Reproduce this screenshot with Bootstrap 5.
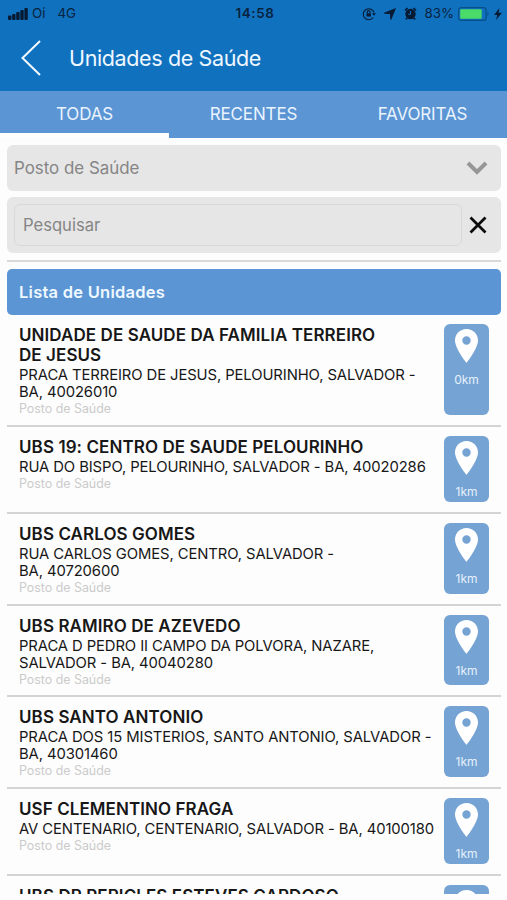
<!DOCTYPE html>
<html lang="pt-BR">
<head>
<meta charset="utf-8">
<meta name="viewport" content="width=device-width, initial-scale=1">
<title>Unidades de Saúde</title>
<link href="https://cdn.jsdelivr.net/npm/bootstrap@5.3.0/dist/css/bootstrap.min.css" rel="stylesheet">
<style>
body{font-family:Inter,"Liberation Sans",sans-serif;background:#fdfdfd;color:#171717}
.screen{height:894px}
.top-area{background:#1071bf}
.status{height:27px;padding:0 5px 0 8px;color:#082340;font-size:13.3px}
.status>div{flex:1 1 0}
.clock{font-weight:600;letter-spacing:.6px;font-size:13.4px}
.title-bar{height:64px;padding:0 0 2px 21px}
.title-bar h1{font-size:21.5px;font-weight:400;margin:1px 0 0 28px;color:#eef7ff;letter-spacing:-.37px}
.tabs{height:47px;background:#5b95d3}
.tabs .nav-link{height:47px;padding:0;line-height:46px;font-size:17px;letter-spacing:-.15px;color:#e9f4ff;border-radius:0}
.tabs .nav-link.active{border-bottom:5px solid #fff;color:#e9f4ff}
.content-area{padding:7px 6px 0 7px}
.panel{background:#e6e6e6;border-radius:6px;color:#858585;font-size:16.9px}
.picker{height:46px;padding:0 13px 0 7px}
.search{height:56px;margin-top:6px;padding:0 14px 0 7px}
.search-input{height:42px;width:448px;border:1px solid #d8d8d8;border-radius:6px;padding:0 8px;background:transparent;font-size:16.6px;color:#858585}
.search-input::placeholder{color:#858585;opacity:1}
.rule{height:2px;background:#d9d9d9;margin:7px 0}
.list-head{height:46px;background:#5b95d3;border-radius:5px;color:#eff8ff;font-weight:600;font-size:16.5px;letter-spacing:.25px;padding:0 0 0 12px}
.unit{padding:9px 12px 10px;border-bottom:2px solid #d4d4d4;height:91.6px}
.unit.first{height:111.5px}
.unit.short{height:87.6px}
.unit h2{font-size:17px;letter-spacing:.08px;line-height:20px;font-weight:600;margin:1px 0 0;white-space:nowrap}
.unit p{font-size:14.8px;letter-spacing:-.09px;line-height:17px;margin:0;white-space:nowrap}
.unit h2+p{margin-top:2px}
.unit .kind{font-size:12.4px;letter-spacing:0;line-height:15px;color:#cbcbcb}
.dist{width:45px;background:#75a3d3;border-radius:6px;color:#e6f1fc;font-size:12px;line-height:14px;padding-top:5px}
.dist svg{display:block;margin-bottom:10px}
</style>
<script src="https://cdn.jsdelivr.net/npm/bootstrap@5.3.0/dist/js/bootstrap.bundle.min.js"></script>
</head>
<body>
<svg class="d-none"><symbol id="pin" viewBox="0 0 23 34"><path fill="#fff" fill-rule="evenodd" d="M11.5 0C5 0 0 5 0 11.5 0 19.5 11.5 34 11.5 34S23 19.5 23 11.5C23 5 18 0 11.5 0Zm0 7.3a4.2 4.2 0 1 1 0 8.4 4.2 4.2 0 0 1 0-8.4Z"/></symbol></svg>
<div class="screen overflow-hidden">
<header class="top-area">
  <div class="status d-flex align-items-center">
    <div class="d-flex align-items-center"><svg width="20" height="12" viewBox="0 0 20 12" fill="#071a33"><rect x="0" y="7.5" width="3.4" height="4.5" rx="1"/><rect x="4.100" y="6" width="3.400" height="6" rx="1"/><rect x="8.200" y="4" width="3.400" height="8" rx="1"/><rect x="12.300" y="2" width="3.400" height="10" rx="1"/><rect x="16.400" y="0" width="3.400" height="12" rx="1"/></svg><span class="ms-1">Oi</span><span class="ps-1 ms-2">4G</span></div>
    <span class="clock">14:58</span>
    <div class="d-flex align-items-center justify-content-end">
      <svg width="14" height="14" viewBox="0 0 14 14" fill="none" stroke="#061a33" stroke-width="1.1"><path d="M11.200 10.500A5.500 5.500 0 1 1 12 5.500"/><path d="M10.200 6.200h3.700L12 8.800Z" fill="#061a33" stroke="none"/><rect x="4.500" y="6.300" width="4.400" height="3.200" fill="#061a33" stroke="none"/><path d="M5.300 6.300V5a1.400 1.400 0 0 1 2.800 0v1.300"/></svg>
      <svg class="ms-2" width="12" height="12" viewBox="0 0 12 12" fill="#061a33"><path d="M12 0 7.300 11.800 6.300 11.500 6 6 .2 5.800 0 4.800Z"/></svg>
      <svg class="ms-2" width="13" height="13" viewBox="0 0 13 13"><circle cx="6.500" cy="7" r="5.200" fill="#061a33"/><path d="M1 3.500 3.600 1M12 3.500 9.400 1M3 11l-1 1.500M10 11l1 1.500" stroke="#061a33" stroke-width="1.700"/><path d="M6.500 4v3.300H4.200" fill="none" stroke="#1071bf"/></svg>
      <span class="ms-2">83%</span>
      <svg class="ms-1" width="32" height="14" viewBox="0 0 32 14"><rect x=".6" y=".6" width="27.500" height="12.800" rx="2.500" fill="none" stroke="#0b4f89" stroke-width="1.200"/><rect x="2.200" y="2.200" width="21.500" height="9.600" rx="1" fill="#4bdb68"/><path d="M29.500 4.500q2 2.500 0 5Z" fill="#0b4f89"/></svg>
      <svg class="ms-1" width="8" height="12" viewBox="0 0 8 12" fill="#061a33"><path d="M5.500 0 0 7h3.300L2 12l6-7.300H4.500Z"/></svg>
    </div>
  </div>
  <div class="title-bar d-flex align-items-center"><svg width="20" height="36" viewBox="0 0 20 36" fill="none" stroke="#f2faff" stroke-width="2"><path d="M19 1 1.500 18 19 35"/></svg><h1>Unidades de Saúde</h1></div>
  <nav class="tabs nav nav-fill row g-0">
    <a class="nav-link active col-4 text-center">TODAS</a><a class="nav-link col-4 text-center">RECENTES</a><a class="nav-link col-4 text-center">FAVORITAS</a>
  </nav>
</header>
<main class="content-area">
  <div class="panel picker d-flex align-items-center justify-content-between"><span class="lh-1">Posto de Saúde</span><svg width="22" height="14" viewBox="0 0 22 14" fill="none" stroke="#969696" stroke-width="4"><path d="M2 2l9 9 9-9"/></svg></div>
  <div class="panel search d-flex align-items-center justify-content-between"><input class="search-input" placeholder="Pesquisar"><svg width="18" height="18" viewBox="0 0 18 18" stroke="#0c0c0c" stroke-width="2.800"><path d="M1.500 1.500l15 15M16.500 1.500l-15 15"/></svg></div>
  <div class="rule"></div>
  <div class="list-head d-flex align-items-center">Lista de Unidades</div>
  <section>
    <article class="unit first d-flex justify-content-between"><div><h2>UNIDADE DE SAUDE DA FAMILIA TERREIRO<br>DE JESUS</h2><p>PRACA TERREIRO DE JESUS, PELOURINHO, SALVADOR -<br>BA, 40026010</p><p class="kind">Posto de Saúde</p></div><div class="dist d-flex flex-column align-items-center"><svg width="23" height="34"><use href="#pin"/></svg>0km</div></article>
    <article class="unit short d-flex justify-content-between"><div><h2>UBS 19: CENTRO DE SAUDE PELOURINHO</h2><p>RUA DO BISPO, PELOURINHO, SALVADOR - BA, 40020286</p><p class="kind">Posto de Saúde</p></div><div class="dist d-flex flex-column align-items-center"><svg width="23" height="34"><use href="#pin"/></svg>1km</div></article>
    <article class="unit d-flex justify-content-between"><div><h2>UBS CARLOS GOMES</h2><p>RUA CARLOS GOMES, CENTRO, SALVADOR -<br>BA, 40720600</p><p class="kind">Posto de Saúde</p></div><div class="dist d-flex flex-column align-items-center"><svg width="23" height="34"><use href="#pin"/></svg>1km</div></article>
    <article class="unit d-flex justify-content-between"><div><h2>UBS RAMIRO DE AZEVEDO</h2><p>PRACA D PEDRO II CAMPO DA POLVORA, NAZARE,<br>SALVADOR - BA, 40040280</p><p class="kind">Posto de Saúde</p></div><div class="dist d-flex flex-column align-items-center"><svg width="23" height="34"><use href="#pin"/></svg>1km</div></article>
    <article class="unit d-flex justify-content-between"><div><h2>UBS SANTO ANTONIO</h2><p>PRACA DOS 15 MISTERIOS, SANTO ANTONIO, SALVADOR -<br>BA, 40301460</p><p class="kind">Posto de Saúde</p></div><div class="dist d-flex flex-column align-items-center"><svg width="23" height="34"><use href="#pin"/></svg>1km</div></article>
    <article class="unit short d-flex justify-content-between"><div><h2>USF CLEMENTINO FRAGA</h2><p>AV CENTENARIO, CENTENARIO, SALVADOR - BA, 40100180</p><p class="kind">Posto de Saúde</p></div><div class="dist d-flex flex-column align-items-center"><svg width="23" height="34"><use href="#pin"/></svg>1km</div></article>
    <article class="unit d-flex justify-content-between"><div><h2>UBS DR PERICLES ESTEVES CARDOSO</h2></div><div class="dist d-flex flex-column align-items-center"><svg width="23" height="34"><use href="#pin"/></svg>1km</div></article>
  </section>
</main>
</div>
</body>
</html>
